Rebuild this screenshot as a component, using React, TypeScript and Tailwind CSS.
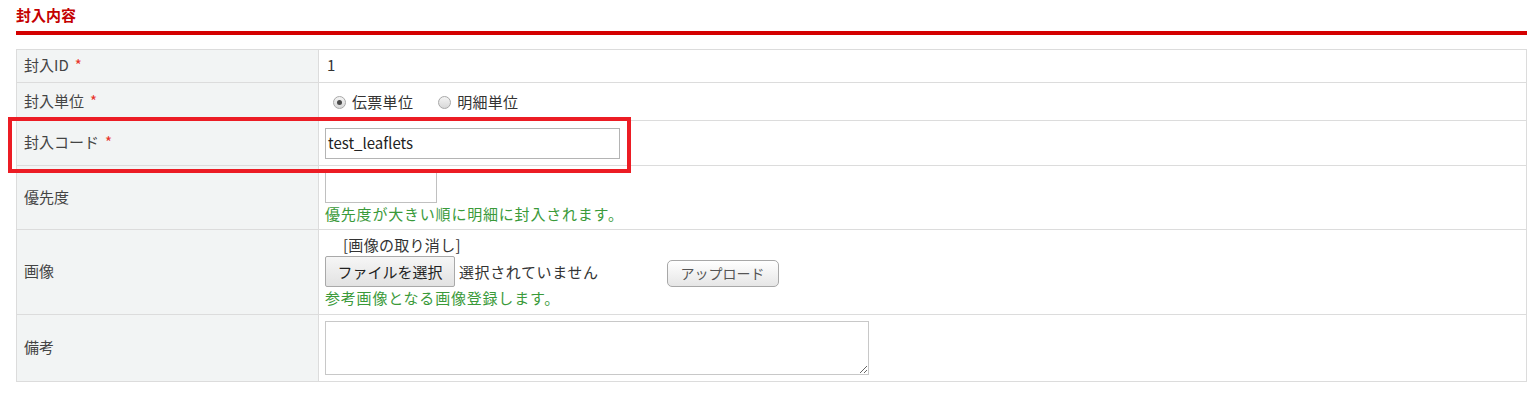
import React from "react";

const font = { fontFamily: '"Noto Sans CJK JP", "Noto Sans", sans-serif' };

function Req() {
  return <span className="ml-[6px] text-[#e8332a]">*</span>;
}

function Radio({ checked, label }: { checked?: boolean; label: string }) {
  return (
    <span className="flex items-center">
      <span className="flex h-[13px] w-[13px] items-center justify-center rounded-full border border-[#a8a8a8] bg-gradient-to-b from-[#f4f4f4] to-[#d8d8d8]">
        {checked ? <span className="h-[5px] w-[5px] rounded-full bg-[#4a4a4a]" /> : null}
      </span>
      <span className="ml-[6px] pb-[2px] tracking-[0.3px]">{label}</span>
    </span>
  );
}

function Row({
  label,
  req,
  h,
  children,
  className = "",
  last,
  extra,
}: {
  label: string;
  req?: boolean;
  h: string;
  children?: React.ReactNode;
  className?: string;
  last?: boolean;
  extra?: React.ReactNode;
}) {
  return (
    <div className={`relative flex ${h} ${last ? "" : "border-b border-[#dcdcdc]"}`}>
      <div className="flex w-[302px] shrink-0 items-center border-r border-[#dcdcdc] bg-[#f2f4f4] pb-[3px] pl-[7px] text-[#444]">
        {label}
        {req ? <Req /> : null}
      </div>
      <div className={`flex-1 bg-white pl-[6px] ${className}`}>{children}</div>
      {extra}
    </div>
  );
}

export default function App() {
  return (
    <div className="min-h-[399px] bg-white pl-4 pr-[9px] pt-[5px] text-[15px] leading-[21px] text-[#333]" style={font}>
      <div className="border-b-4 border-[#d40000] pb-[6px] text-[15px] font-bold leading-[20px] text-[#c40000]">
        封入内容
      </div>
      <div className="mt-[14px] border border-[#dcdcdc]">
        <Row label="封入ID" req h="h-[33px]" className="flex items-center pb-[3px]">
          <span className="ml-[2px]">1</span>
        </Row>
        <Row label="封入単位" req h="h-[38px]" className="flex items-center pt-[2px]">
          <span className="ml-[8px] flex items-center gap-[25px]">
            <Radio checked label="伝票単位" />
            <Radio label="明細単位" />
          </span>
        </Row>
        <Row
          label="封入コード"
          req
          h="h-[45px] z-10"
          className="flex items-center"
          extra={
            <div className="pointer-events-none absolute left-[-9px] top-[-4px] z-20 h-[56px] w-[623px] border-4 border-[#ec1c24]" />
          }
        >
          <div className="flex h-[31px] w-[295px] items-center border border-[#b4b4b4] pb-[2px] pl-[2px] text-[15px] text-[#222]">
            test_leaflets
          </div>
        </Row>
        <Row label="優先度" h="h-[64px]" className="flex flex-col pt-[6px]">
          <div className="h-[31px] w-[112px] border border-[#c0c0c0]" />
          <div className="tracking-[0.8px] text-[#3a9a3a]">優先度が大きい順に明細に封入されます。</div>
        </Row>
        <Row label="画像" h="h-[85px]" className="flex flex-col pt-[4px]">
          <div className="ml-[18px] tracking-[0.3px]">[画像の取り消し]</div>
          <div className="mt-[1px] flex items-center">
            <div className="flex h-[31px] w-[130px] items-center justify-center rounded-[2px] border border-[#a9a9a9] bg-gradient-to-b from-[#f6f6f6] to-[#e2e2e2] pb-[1px] text-[15px] text-[#222]">
              ファイルを選択
            </div>
            <span className="ml-[4px] tracking-[0.6px] text-[#333]">選択されていません</span>
            <div className="ml-[68px] mt-[3px] flex h-[27px] w-[112px] items-center justify-center rounded-[5px] border border-[#a8a8a8] bg-gradient-to-b from-[#ffffff] to-[#e6e6e6] text-[14px] text-[#555]">
              アップロード
            </div>
          </div>
          <div className="tracking-[0.8px] text-[#3a9a3a]">参考画像となる画像登録します。</div>
        </Row>
        <Row label="備考" h="h-[66px]" last className="flex items-start pt-[6px]">
          <textarea className="h-[54px] w-[544px] border border-[#c8c8c8] bg-white outline-none" style={font} />
        </Row>
      </div>
    </div>
  );
}
